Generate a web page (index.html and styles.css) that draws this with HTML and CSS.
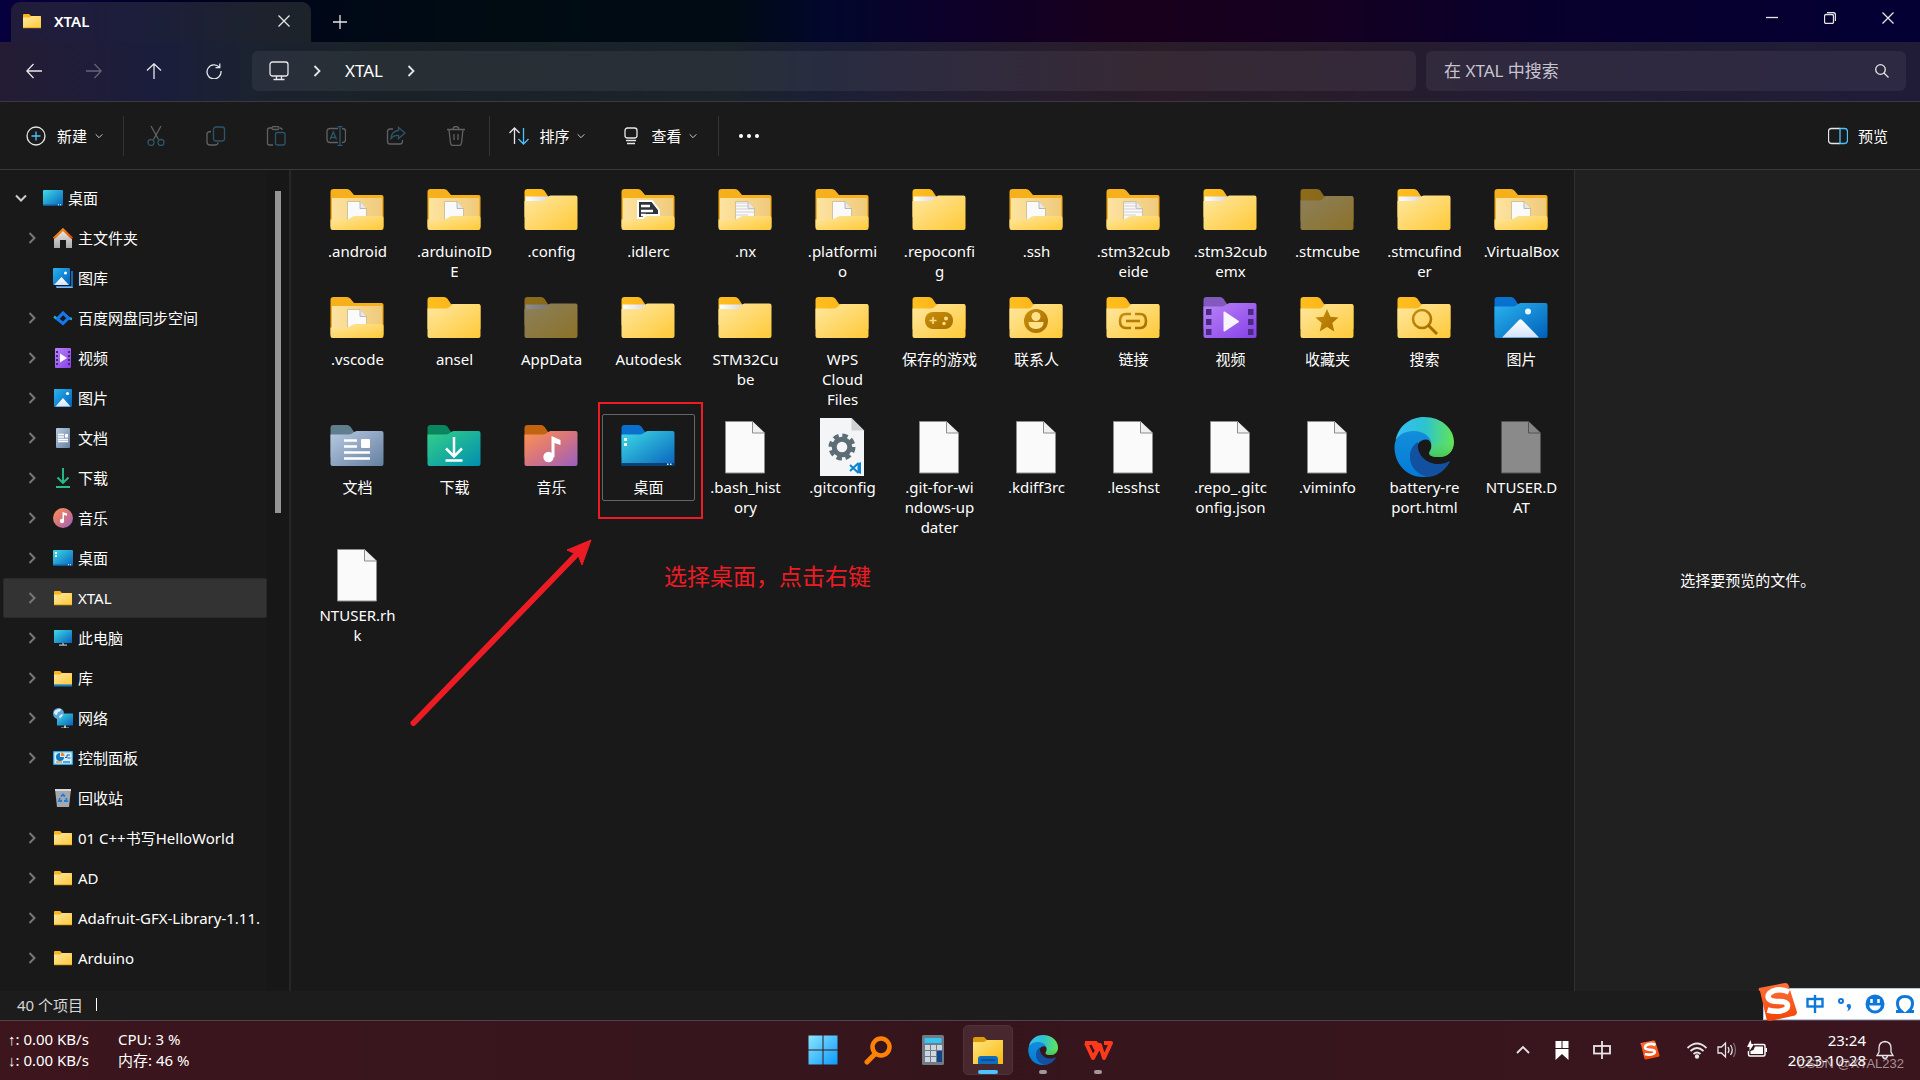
FILE: index.html
```html
<!DOCTYPE html>
<html lang="zh-CN">
<head>
  <meta charset="UTF-8">
  <meta name="viewport" content="width=device-width, initial-scale=1.0">
  <title>XTAL</title>
  <link rel="stylesheet" href="styles.css">
</head>
<body>

<!-- Icon sprite -->
<svg class="sprite" aria-hidden="true">
  <defs>
    <linearGradient id="gFolder" x1="0" y1="0" x2="1" y2="1"><stop offset="0" stop-color="#ffe8a2"/><stop offset="1" stop-color="#ffc937"/></linearGradient>
    <linearGradient id="gTab" x1="0" y1="0" x2="1" y2="0"><stop offset="0" stop-color="#ffbf1f"/><stop offset="1" stop-color="#f5ab14"/></linearGradient>
    <linearGradient id="gInner" x1="0" y1="0" x2="1" y2="0"><stop offset="0" stop-color="#fde3a0"/><stop offset="1" stop-color="#efca7c"/></linearGradient>
    <linearGradient id="gPaper" x1="0" y1="0" x2="1" y2="0"><stop offset="0" stop-color="#ffffff"/><stop offset="1" stop-color="#d9d9e4"/></linearGradient>
    <linearGradient id="gBrown" x1="0" y1="0" x2="1" y2="1"><stop offset="0" stop-color="#c98f0c"/><stop offset="1" stop-color="#a66f00"/></linearGradient>
    <linearGradient id="gVideo" x1="0" y1="0" x2="1" y2="1"><stop offset="0" stop-color="#bb84f8"/><stop offset="1" stop-color="#8540e6"/></linearGradient>
    <linearGradient id="gPic" x1="0" y1="0" x2="1" y2="1"><stop offset="0" stop-color="#2ab4ef"/><stop offset="1" stop-color="#005fba"/></linearGradient>
    <linearGradient id="gSnow" x1="0" y1="0" x2="0" y2="1"><stop offset="0" stop-color="#ffffff"/><stop offset="1" stop-color="#d3e3fa"/></linearGradient>
    <linearGradient id="gDoc" x1="0" y1="0" x2="1" y2="1"><stop offset="0" stop-color="#b9cbe4"/><stop offset="1" stop-color="#647f9f"/></linearGradient>
    <linearGradient id="gDown" x1="0" y1="0" x2="1" y2="1"><stop offset="0" stop-color="#34d087"/><stop offset="1" stop-color="#008fb0"/></linearGradient>
    <linearGradient id="gMusic" x1="0" y1="0" x2="1" y2="1"><stop offset="0" stop-color="#ff9350"/><stop offset=".5" stop-color="#d57480"/><stop offset="1" stop-color="#9860c0"/></linearGradient>
    <linearGradient id="gDesk" x1="0" y1="0" x2="1" y2="1"><stop offset="0" stop-color="#3ddbe6"/><stop offset="1" stop-color="#0862bd"/></linearGradient>
    <linearGradient id="gWin" x1="0" y1="0" x2="1" y2="1"><stop offset="0" stop-color="#8ae6ff"/><stop offset="1" stop-color="#0c99fa"/></linearGradient>
    <linearGradient id="gEdge" x1="0" y1="0" x2="1" y2="0"><stop offset="0" stop-color="#38bdf8"/><stop offset=".5" stop-color="#2cc3d0"/><stop offset="1" stop-color="#64e455"/></linearGradient>
    <linearGradient id="gEdgeGreen" x1="0" y1="0" x2="0" y2="1"><stop offset="0" stop-color="#64e455" stop-opacity="0"/><stop offset="1" stop-color="#45c556"/></linearGradient>
    <linearGradient id="gEdgeBlue" x1="0" y1="0" x2="0" y2="1"><stop offset="0" stop-color="#138ed9"/><stop offset="1" stop-color="#037bd8"/></linearGradient>
    <linearGradient id="gSogou" x1="0" y1="0" x2="0" y2="1"><stop offset="0" stop-color="#ff7038"/><stop offset="1" stop-color="#f04508"/></linearGradient>
    <linearGradient id="gRoof" x1="0" y1="0" x2="1" y2="1"><stop offset="0" stop-color="#f9a010"/><stop offset="1" stop-color="#d83f08"/></linearGradient>
    <linearGradient id="gGray" x1="0" y1="0" x2="0" y2="1"><stop offset="0" stop-color="#e8e8e8"/><stop offset="1" stop-color="#a9a9a9"/></linearGradient>
    <linearGradient id="gTaskFolder" x1="0" y1="0" x2="1" y2="1"><stop offset="0" stop-color="#ffe680"/><stop offset="1" stop-color="#f9b70c"/></linearGradient>
  </defs>

  <!-- 60px file icons -->
  <symbol id="folder" viewBox="0 0 60 60">
    <path d="M3.500 11q0-3 3-3H20q2 0 3.500 1.700L27 15H54q2.500 0 2.500 2V40h-53z" fill="url(#gTab)"/>
    <path d="M3.500 19.500H22q2.500 0 4.500-2.500t4-2H54.500q2 0 2 2V47q0 2-2 2h-49q-2 0-2-2z" fill="url(#gFolder)"/>
  </symbol>
  <symbol id="folder-paper" viewBox="0 0 60 60">
    <path d="M3.500 11q0-3 3-3H20q2 0 3.500 1.700L27.500 16H54v20h-50.500z" fill="url(#gTab)"/>
    <path d="M4.500 15.500H27v6H4.500z" fill="url(#gPaper)"/>
    <path d="M3.500 20H21q2.500 0 4.500-2.700t4-2.800H54.500q2 0 2 2V47q0 2-2 2h-49q-2 0-2-2z" fill="url(#gFolder)"/>
  </symbol>
  <symbol id="folder-open" viewBox="0 0 60 60">
    <path d="M3.500 11q0-3 3-3H20q2 0 3.500 1.700L27 14H54.500q2 0 2 2V46h-53z" fill="#f6b01c"/>
    <path d="M5 17H55V40H5z" fill="url(#gInner)"/>
    <path d="M20.500 20.500H33l6.500 7V42h-19z" fill="#fafafa" stroke="#c8b88c" stroke-width=".8"/>
    <path d="M33 20.500v7h6.500" fill="#e8e8e8" stroke="#a9a9a9" stroke-width=".8"/>
    <path d="M3.500 38.500H19q2.500 0 4.500-1.500t4-2H54.500q2 0 2 2V47q0 2-2 2h-49q-2 0-2-2z" fill="url(#gFolder)"/>
  </symbol>
  <symbol id="folder-code" viewBox="0 0 60 60">
    <use href="#folder-open"/>
    <path d="M20 20H34l7 9v5H29q-2 0-4 3h-5z" fill="#30343a" stroke="#fff" stroke-width="2"/>
    <path d="M23 25h9M23 30h12M23 34h5" stroke="#fff" stroke-width="2.500"/>
  </symbol>
  <symbol id="folder-text" viewBox="0 0 60 60">
    <use href="#folder-open"/>
    <path d="M21 22h12M21 25h12M21 28h18M21 31h18M21 34h12" stroke="#d0d0d0" stroke-width="1"/>
  </symbol>
  <symbol id="folder-game" viewBox="0 0 60 60">
    <use href="#folder"/>
    <rect x="16" y="23" width="28" height="17" rx="8" fill="url(#gBrown)"/>
    <path d="M20.500 31.500h7M24 28v7" stroke="#ffdf82" stroke-width="1.600"/><circle cx="37" cy="29.500" r="2" fill="#ffdf82"/><circle cx="35" cy="34.500" r="1.700" fill="#ffdf82"/>
  </symbol>
  <symbol id="folder-user" viewBox="0 0 60 60">
    <use href="#folder"/>
    <circle cx="30" cy="32" r="12" fill="url(#gBrown)"/><circle cx="30" cy="27.500" r="4.500" fill="#ffe18a"/><path d="M22.500 33h15q0 7-7.500 7t-7.500-7z" fill="#ffe18a"/>
  </symbol>
  <symbol id="folder-link" viewBox="0 0 60 60">
    <use href="#folder"/>
    <path d="M28 25h-5q-6 0-6 7t6 7h5M32 25h5q6 0 6 7t-6 7h-5" fill="none" stroke="url(#gBrown)" stroke-width="2.600"/>
    <path d="M23 32h14" stroke="#b67c05" stroke-width="2.600"/>
  </symbol>
  <symbol id="folder-star" viewBox="0 0 60 60">
    <use href="#folder"/>
    <path d="M30 20l3.400 7.700 8.100.700-6.200 5.500 2 8.500-7.300-4.500-7.300 4.500 2-8.500-6.200-5.500 8.100-.700z" fill="url(#gBrown)"/>
  </symbol>
  <symbol id="folder-search" viewBox="0 0 60 60">
    <use href="#folder"/>
    <circle cx="28" cy="30" r="9" fill="none" stroke="url(#gBrown)" stroke-width="2.600"/><path d="M34 36l9 9" stroke="#a66f00" stroke-width="3"/>
  </symbol>
  <symbol id="folder-video" viewBox="0 0 60 60">
    <path d="M3.500 11q0-3 3-3H20q2 0 3.500 1.700L27 15H54V40h-50.500z" fill="#8259bd"/>
    <path d="M3.500 17.500H22q2.500 0 4.500-2t4-1.500H54.500q2 0 2 2V47q0 2-2 2h-49q-2 0-2-2z" fill="url(#gVideo)"/>
    <path d="M6 20h5.500v6H6zM6 30h5.500v6H6zM6 40h5.500v6H6zM48 20h5.500v6H48zM48 30h5.500v6H48zM48 40h5.500v6H48z" fill="#4a2a83"/>
    <path d="M23.500 23.500v18q0 1.500 1.500.700l13.500-9q1-.700 0-1.400L25 22.800q-1.500-.8-1.500.7z" fill="#f8f3ff"/>
  </symbol>
  <symbol id="folder-pic" viewBox="0 0 60 60">
    <path d="M3.500 11q0-3 3-3H20q2 0 3.500 1.700L27 15H54V40h-50.500z" fill="#0870cf"/>
    <path d="M3.500 17.500H22q2.500 0 4.500-2t4-1.500H54.500q2 0 2 2V47q0 2-2 2h-49q-2 0-2-2z" fill="url(#gPic)"/>
    <path d="M11 48.500L28 31q1.500-1.500 3 0L48 48.500z" fill="url(#gSnow)"/><circle cx="37" cy="22.500" r="3" fill="#e8f6ff"/>
  </symbol>
  <symbol id="folder-doc" viewBox="0 0 60 60">
    <path d="M3.500 11q0-3 3-3H20q2 0 3.500 1.700L27 15H54V40h-50.500z" fill="#5f7f8c"/>
    <path d="M3.500 17.500H22q2.500 0 4.500-2t4-1.500H54.500q2 0 2 2V47q0 2-2 2h-49q-2 0-2-2z" fill="url(#gDoc)"/>
    <path d="M17 23.500h13M17 29.500h13M17 35.500h26M17 41.500h26" stroke="#fff" stroke-width="2.600"/><rect x="34" y="22" width="9" height="9" rx="1" fill="#fff"/>
  </symbol>
  <symbol id="folder-down" viewBox="0 0 60 60">
    <path d="M3.500 11q0-3 3-3H20q2 0 3.500 1.700L27 15H54V40h-50.500z" fill="#0a8560"/>
    <path d="M3.500 17.500H22q2.500 0 4.500-2t4-1.500H54.500q2 0 2 2V47q0 2-2 2h-49q-2 0-2-2z" fill="url(#gDown)"/>
    <path d="M30 20v19M22 31.500l8 8 8-8M21.500 43.500h17" fill="none" stroke="#fff" stroke-width="2.500"/>
  </symbol>
  <symbol id="folder-music" viewBox="0 0 60 60">
    <path d="M3.500 11q0-3 3-3H20q2 0 3.500 1.700L27 15H54V40h-50.500z" fill="#c2630f"/>
    <path d="M3.500 17.500H22q2.500 0 4.500-2t4-1.500H54.500q2 0 2 2V47q0 2-2 2h-49q-2 0-2-2z" fill="url(#gMusic)"/>
    <path d="M30.500 19l9 4v5l-6-2V40h-3z" fill="#fff"/><circle cx="27.500" cy="40" r="5.200" fill="#fff"/>
  </symbol>
  <symbol id="folder-desk" viewBox="0 0 60 60">
    <path d="M3.500 11q0-3 3-3H20q2 0 3.500 1.700L27 15H54V40h-50.500z" fill="#0b6fce"/>
    <path d="M3.500 17.500H22q2.500 0 4.500-2t4-1.500H54.500q2 0 2 2V47q0 2-2 2h-49q-2 0-2-2z" fill="url(#gDesk)"/>
    <path d="M3.500 46h53v1q0 2-2 2h-49q-2 0-2-2z" fill="#0b4174"/>
    <path d="M6 21h3v3H6zM6 26h3v3H6zM49 46.500h1.500v1.500H49zM52 46.500h1.500v1.500H52z" fill="#e8ffff"/>
  </symbol>
  <symbol id="file" viewBox="0 0 60 60">
    <path d="M10.500 4.500H37.500l12 11.500V56h-39z" fill="#fafafa" stroke="#8d8d8d"/><path d="M37.500 4.500V16h12" fill="#f0f0f0" stroke="#8d8d8d"/>
  </symbol>
  <symbol id="file-config" viewBox="0 0 60 60">
    <path d="M8 1H39.500L52 13.500V59H8z" fill="#f4f5f6"/><path d="M39.500 1v12.500H52z" fill="#cfd2d4"/>
    <circle cx="30" cy="30" r="7.800" fill="none" stroke="#5d6d75" stroke-width="5"/>
    <circle cx="30" cy="30" r="11.500" fill="none" stroke="#5d6d75" stroke-width="4" stroke-dasharray="5.400 3.630"/>
    <path d="M49 45v12l-3.500-1.500V46.500z" fill="#0a83d0"/><path d="M46.500 46L38 54M46.500 56L38 48" stroke="#0a83d0" stroke-width="2"/>
  </symbol>
  <symbol id="edge" viewBox="0 0 60 60">
    <path d="M1.500 24C4 9 16 0 30 0c18 0 30 12 30 25 0 9-6 15-15 15-7 0-11-2-9.500-5 3-4 3-11-3.500-14.500C22 15 5 16 1.500 24z" fill="url(#gEdge)"/>
    <path d="M60 22c0 12-6 18-15 18-7 0-11-2-9.500-5q2.500-4 2-9z" fill="url(#gEdgeGreen)"/>
    <path d="M.5 29C1 19 10 14 20 14c9 0 16 5 17 11-3-4-10-3-13 2-6 10-1 26 13 31.500-3 1-5 1.500-8 1.500C13 60 0 47 .5 29z" fill="url(#gEdgeBlue)"/>
    <path d="M24 25c-2 12 8 22 20 22 5 0 8-1 10.500-2.500 1-.5 1.500 0 1 1C51 54 42 60 33 60 22 57 15 48 16 38c.5-6 4-11 8-13z" fill="#1250a0"/>
  </symbol>

  <!-- 20px tree icons -->
  <symbol id="s-desk" viewBox="0 0 20 20"><rect y="2" width="20" height="15.500" rx="1" fill="url(#gDesk)"/><path d="M0 16.500h20v1H0z" fill="#0b5fa8"/><path d="M15 16.300h1v1h-1zM17 16.300h1v1h-1z" fill="#fff"/></symbol>
  <symbol id="s-desk2" viewBox="0 0 20 20"><use href="#s-desk"/><path d="M2 4h2v2H2zM2 7h2v2H2z" fill="#fff"/></symbol>
  <symbol id="s-home" viewBox="0 0 20 20"><path d="M1 9.500L10 2l9 7.500V20h-6v-8H7v8H1z" fill="url(#gGray)"/><path d="M.7 10.500L10 1.500l9.300 9" fill="none" stroke="url(#gRoof)" stroke-width="2.400"/></symbol>
  <symbol id="s-gallery" viewBox="0 0 20 20"><path d="M3 3h17v17H3z" fill="#0b6bc0"/><path d="M3 18.500h16l1 1.500H4z" fill="#7ab8f0"/><path d="M0 0h18v18H0z" fill="#191919"/><rect width="17" height="17" rx="1" fill="url(#gPic)"/><path d="M1 17l7.500-8 7.500 8z" fill="url(#gSnow)"/><circle cx="12.500" cy="5" r="1.500" fill="#fff"/></symbol>
  <symbol id="s-baidu" viewBox="0 0 20 20"><path d="M1 8.500l3 2.500L10 5l5 5 4 1" fill="none" stroke="#22aed0" stroke-width="2.400"/><path d="M4.500 11L10 5l5.500 5L10 15.500z" fill="none" stroke="#1478f0" stroke-width="3"/></symbol>
  <symbol id="s-video" viewBox="0 0 20 20"><rect x="2" width="16" height="20" rx="1" fill="url(#gVideo)"/><path d="M3 3h2v2H3zM3 7h2v2H3zM3 11h2v2H3zM3 15h2v2H3zM15 3h2v2h-2zM15 7h2v2h-2zM15 11h2v2h-2zM15 15h2v2h-2z" fill="#44277c"/><path d="M7 5.500l7 4.500-7 4.500z" fill="#fff"/></symbol>
  <symbol id="s-pic" viewBox="0 0 20 20"><rect x="1" y="1" width="18" height="18" rx="1" fill="url(#gPic)"/><path d="M2.500 18.500L10 10l7.500 8.500z" fill="url(#gSnow)"/><circle cx="14.500" cy="5.500" r="1.600" fill="#fff"/></symbol>
  <symbol id="s-doc" viewBox="0 0 20 20"><rect x="3" width="14" height="20" rx="1" fill="url(#gDoc)"/><path d="M5 6.500h6M5 9h6M5 11.500h10M5 13.500h10" stroke="#fff" stroke-width="1.300"/><path d="M12 6h3v3.500h-3z" fill="#fff"/></symbol>
  <symbol id="s-down" viewBox="0 0 20 20"><path d="M10 0v15M4.500 9.500L10 15l5.500-5.500M3 19h14" fill="none" stroke="#27bd8d" stroke-width="1.900"/></symbol>
  <symbol id="s-music" viewBox="0 0 20 20"><circle cx="10" cy="10" r="10" fill="url(#gMusic)"/><path d="M9.500 4l4.500 1.500v2.300l-3-.8v6H9.500z" fill="#fff"/><circle cx="9" cy="13" r="2.200" fill="#fff"/></symbol>
  <symbol id="s-folder" viewBox="0 0 20 20"><path d="M1 4q0-1 1-1h5l2 2h9q1 0 1 1v9H1z" fill="#fbb51b"/><path d="M1 6.500h6.500l2-1.500H18q1 0 1 1v11H1z" fill="url(#gFolder)"/><path d="M1 16.300h18v.9H1z" fill="#e8a817"/></symbol>
  <symbol id="s-pc" viewBox="0 0 20 20"><rect x="1" y="2" width="18" height="13" rx=".5" fill="url(#gDesk)"/><path d="M9 15h2v2H9z" fill="#7e8a92"/><path d="M6 16.500h8v1.200H6z" fill="#bcc6cc"/></symbol>
  <symbol id="s-lib" viewBox="0 0 20 20"><use href="#s-folder"/><path d="M1 16.500h18v2H1z" fill="#0d7fd8"/></symbol>
  <symbol id="s-net" viewBox="0 0 20 20"><rect x="4" y="5.500" width="16" height="12" fill="url(#gDesk)"/><path d="M11 17.500h2v2h3v1H8v-1h3z" fill="#bcc6cc"/><circle cx="5.500" cy="5.500" r="5.500" fill="#5aa7d8"/><path d="M2 2.500q4-2.500 6-1.500 0 3-3 3l-1 3q-3 0-3-3zM6 8l3-2 1 1-3 3.500z" fill="#d8edf8"/></symbol>
  <symbol id="s-ctrl" viewBox="0 0 20 20"><rect y="3" width="20" height="14" rx="1" fill="#2aa6e4"/><path d="M1.300 4.300h17.400v11.400H1.300z" fill="#d2effb"/><path d="M7 5a4 4 0 1 0 4 4H7z" fill="#1279c4"/><path d="M8 4.500a3.500 3.500 0 0 1 3.500 3.500H8z" fill="#f2861c"/><path d="M12 9.500h2V7h3M14.500 10h3" stroke="#0c62ac" fill="none"/><path d="M3 14h6" stroke="#f2861c" stroke-width="1.300"/><path d="M10 14h7" stroke="#1279c4" stroke-width="1.300"/></symbol>
  <symbol id="s-bin" viewBox="0 0 20 20"><path d="M2 1h16l-2 18H4z" fill="#a4a8ad"/><path d="M2 1h16v2H2z" fill="#d4d8dc"/><path d="M8 8.500L10 6.500l2 2M13 10l1 3h-3M9 13H6l1-3" stroke="#1a7fd8" stroke-width="1.800" fill="none"/></symbol>

  <!-- line glyphs -->
  <symbol id="i-chev-r" viewBox="0 0 12 12"><path d="M3.500 1l5 5-5 5"/></symbol>
  <symbol id="i-chev-d" viewBox="0 0 12 12"><path d="M1 3.500l5 5 5-5"/></symbol>
  <symbol id="i-x" viewBox="0 0 12 12"><path d="M.500.500l11 11M11.500.500l-11 11"/></symbol>
  <symbol id="i-search" viewBox="0 0 16 16"><circle cx="6.500" cy="6.500" r="4.800"/><path d="M10 10l4.500 4.500"/></symbol>
  <symbol id="i-sogou" viewBox="0 0 40 40"><path d="M3 8q-2 0-1-3l26-5q3 0 3.500 2L40 29q0 3-2 3.500L13 38q-3 0-3.500-2z" transform="translate(-1 1)" fill="url(#gSogou)"/><path d="M31 10q-8-4-16-1-7 3.500-4 8 2 2.500 10 2.500 8 0 8.500 3.500.5 4.500-7 6-6 1-13-1" fill="none" stroke="#fff" stroke-width="5.500"/></symbol>
</svg>

<header class="titlebar">
  <div class="tab">
    <svg class="ic20"><use href="#s-folder"/></svg>
    <span class="tab-name">XTAL</span>
    <button class="tab-close" aria-label="关闭标签页"><svg class="ic12 line"><use href="#i-x"/></svg></button>
  </div>
  <button class="tab-new" aria-label="新标签页"><svg class="line" width="14" height="14" viewBox="0 0 14 14"><path d="M7 0v14M0 7h14"/></svg></button>
  <div class="win-buttons">
    <button aria-label="最小化"><svg class="ic12 line"><path d="M0 5.500h12"/></svg></button>
    <button aria-label="还原"><svg class="ic12 line"><rect x=".5" y="2.500" width="9" height="9" rx="1.500"/><path d="M3 .500h6q2.500 0 2.500 2.500v6"/></svg></button>
    <button aria-label="关闭"><svg class="ic12 line"><use href="#i-x"/></svg></button>
  </div>
</header>

<div class="navbar">
  <div class="nav-buttons">
    <button aria-label="后退"><svg class="ic16 line" viewBox="0 0 16 16"><path d="M16 8H1M7.500 1L.800 8l6.700 7"/></svg></button>
    <button aria-label="前进" disabled><svg class="ic16 line" viewBox="0 0 16 16"><path d="M0 8h15M8.500 1l6.700 7-6.700 7"/></svg></button>
    <button aria-label="上移"><svg class="ic16 line" viewBox="0 0 16 16"><path d="M8 16V1M1 7.500L8 .800l7 6.700"/></svg></button>
    <button aria-label="刷新"><svg class="ic16 line" viewBox="0 0 16 16"><path d="M13.500 4.500A7 7 0 1 0 15 8M9.500 4.700h4.300V.500"/></svg></button>
  </div>
  <nav class="address" aria-label="地址">
    <svg class="ic20 line" viewBox="0 0 20 20"><rect x="1" y="1" width="18" height="14" rx="2.500"/><path d="M7.500 15v3M12.500 15v3M4.500 18.500h11"/></svg>
    <svg class="ic12 line bold"><use href="#i-chev-r"/></svg>
    <a href="#">XTAL</a>
    <svg class="ic12 line bold"><use href="#i-chev-r"/></svg>
  </nav>
  <form class="search">
    <input type="text" placeholder="在 XTAL 中搜索" aria-label="在 XTAL 中搜索">
    <button type="button" aria-label="搜索"><svg class="ic16 line"><use href="#i-search"/></svg></button>
  </form>
</div>

<div class="toolbar">
  <button class="tool tool-new"><svg class="ic20 line" viewBox="0 0 20 20"><circle cx="10" cy="10" r="9"/><path class="blue" d="M10 5.500v9M5.500 10h9"/></svg>新建<svg class="caret line"><use href="#i-chev-d"/></svg></button>
  <i class="sep"></i>
  <div class="tool-icons">
    <button aria-label="剪切" disabled><svg class="ic20 line" viewBox="0 0 20 20"><path d="M5 0l7.500 13.500M15 0L7.500 13.500"/><g class="blue"><circle cx="5" cy="16.500" r="3"/><circle cx="15" cy="16.500" r="3"/></g></svg></button>
    <button aria-label="复制" disabled><svg class="ic20 line" viewBox="0 0 20 20"><path d="M5 5.500Q1 5.500 1 8v8q0 3 3 3h5q3 0 3-2.500"/><rect class="blue" x="7.500" y="1" width="11" height="14" rx="2.500"/></svg></button>
    <button aria-label="粘贴" disabled><svg class="ic20 line" viewBox="0 0 20 20"><path d="M6 2H3.500Q1.500 2 1.500 4v13q0 2 2 2H7M14 2q2 0 2 2"/><rect x="6" y=".5" width="7" height="3" rx="1.500"/><rect class="blue" x="9.500" y="6.500" width="9.500" height="12.500" rx="2"/></svg></button>
    <button aria-label="重命名" disabled><svg class="ic20 line" viewBox="0 0 20 20"><path d="M12 2.500H4Q1 2.500 1 5.500v8q0 3 3 3h8M16 2.500q3.500 0 3.500 3v8q0 3-3.500 3"/><path class="blue" d="M4 13.500L7.300 6l3.200 7.500M5 11.500h4.500M14 .500v19M11.500.500h5M11.500 19.500h5"/></svg></button>
    <button aria-label="共享" disabled><svg class="ic20 line" viewBox="0 0 20 20"><path d="M7 3H4Q1.500 3 1.500 5.500v10Q1.500 18 4 18h10q2.500 0 2.500-2.500V14"/><path class="blue" d="M12.500 1.500L19 7l-6.500 5.500V9.500Q8 9 5 12.500 5.500 5 12.500 4.500z"/></svg></button>
    <button aria-label="删除" disabled><svg class="ic20 line" viewBox="0 0 20 20"><path d="M1 3.500h18M7 3.500q0-3 3-3t3 3M3 3.500L4.500 17q.3 2.500 2.500 2.500h6q2.200 0 2.500-2.500L17 3.500M8 8v6M12 8v6"/></svg></button>
  </div>
  <i class="sep"></i>
  <button class="tool tool-wide"><svg class="ic20 line" viewBox="0 0 20 20"><path d="M5.500 18V2M.500 7l5-5 5 5"/><path class="blue" d="M14.500 2v16M9.500 13l5 5 5-5"/></svg>排序<svg class="caret line"><use href="#i-chev-d"/></svg></button>
  <button class="tool tool-wide"><svg class="ic20 line" viewBox="0 0 20 20"><rect x="4" y="2" width="12" height="10" rx="2.500"/><path d="M5 14.500h10M6 17.500h8"/></svg>查看<svg class="caret line"><use href="#i-chev-d"/></svg></button>
  <i class="sep"></i>
  <button class="more" aria-label="更多"><svg class="ic20" viewBox="0 0 20 20" fill="#fff"><circle cx="2" cy="10" r="2"/><circle cx="10" cy="10" r="2"/><circle cx="18" cy="10" r="2"/></svg></button>
  <button class="tool preview-toggle"><svg class="ic20 line" viewBox="0 0 20 20"><path d="M12 2.500H3.500Q.500 2.500.500 5.500v9q0 3 3 3H12"/><path class="blue" d="M12 2.500h4.500q3 0 3 3v9q0 3-3 3H12z"/></svg>预览</button>
</div>

<div class="body">
  <aside class="sidebar">
    <ul class="tree">
      <li><a class="root" href="#"><svg class="ic12 arrow open"><use href="#i-chev-d"/></svg><svg class="ic20"><use href="#s-desk"/></svg>桌面</a></li>
      <li><a href="#"><svg class="ic12 arrow"><use href="#i-chev-r"/></svg><svg class="ic20"><use href="#s-home"/></svg>主文件夹</a></li>
      <li><a href="#"><svg class="ic12 arrow"></svg><svg class="ic20"><use href="#s-gallery"/></svg>图库</a></li>
      <li><a href="#"><svg class="ic12 arrow"><use href="#i-chev-r"/></svg><svg class="ic20"><use href="#s-baidu"/></svg>百度网盘同步空间</a></li>
      <li><a href="#"><svg class="ic12 arrow"><use href="#i-chev-r"/></svg><svg class="ic20"><use href="#s-video"/></svg>视频</a></li>
      <li><a href="#"><svg class="ic12 arrow"><use href="#i-chev-r"/></svg><svg class="ic20"><use href="#s-pic"/></svg>图片</a></li>
      <li><a href="#"><svg class="ic12 arrow"><use href="#i-chev-r"/></svg><svg class="ic20"><use href="#s-doc"/></svg>文档</a></li>
      <li><a href="#"><svg class="ic12 arrow"><use href="#i-chev-r"/></svg><svg class="ic20"><use href="#s-down"/></svg>下载</a></li>
      <li><a href="#"><svg class="ic12 arrow"><use href="#i-chev-r"/></svg><svg class="ic20"><use href="#s-music"/></svg>音乐</a></li>
      <li><a href="#"><svg class="ic12 arrow"><use href="#i-chev-r"/></svg><svg class="ic20"><use href="#s-desk2"/></svg>桌面</a></li>
      <li><a class="current" href="#"><svg class="ic12 arrow"><use href="#i-chev-r"/></svg><svg class="ic20"><use href="#s-folder"/></svg>XTAL</a></li>
      <li><a href="#"><svg class="ic12 arrow"><use href="#i-chev-r"/></svg><svg class="ic20"><use href="#s-pc"/></svg>此电脑</a></li>
      <li><a href="#"><svg class="ic12 arrow"><use href="#i-chev-r"/></svg><svg class="ic20"><use href="#s-lib"/></svg>库</a></li>
      <li><a href="#"><svg class="ic12 arrow"><use href="#i-chev-r"/></svg><svg class="ic20"><use href="#s-net"/></svg>网络</a></li>
      <li><a href="#"><svg class="ic12 arrow"><use href="#i-chev-r"/></svg><svg class="ic20"><use href="#s-ctrl"/></svg>控制面板</a></li>
      <li><a href="#"><svg class="ic12 arrow"></svg><svg class="ic20"><use href="#s-bin"/></svg>回收站</a></li>
      <li><a href="#"><svg class="ic12 arrow"><use href="#i-chev-r"/></svg><svg class="ic20"><use href="#s-folder"/></svg>01 C++书写HelloWorld</a></li>
      <li><a href="#"><svg class="ic12 arrow"><use href="#i-chev-r"/></svg><svg class="ic20"><use href="#s-folder"/></svg>AD</a></li>
      <li><a href="#"><svg class="ic12 arrow"><use href="#i-chev-r"/></svg><svg class="ic20"><use href="#s-folder"/></svg>Adafruit-GFX-Library-1.11.</a></li>
      <li><a href="#"><svg class="ic12 arrow"><use href="#i-chev-r"/></svg><svg class="ic20"><use href="#s-folder"/></svg>Arduino</a></li>
    </ul>
    <div class="scroll"><div class="thumb"></div></div>
  </aside>

  <main class="files">
    <div class="item"><svg><use href="#folder-open"/></svg><span>.android</span></div>
    <div class="item"><svg><use href="#folder-open"/></svg><span>.arduinoID<br>E</span></div>
    <div class="item"><svg><use href="#folder-paper"/></svg><span>.config</span></div>
    <div class="item"><svg><use href="#folder-code"/></svg><span>.idlerc</span></div>
    <div class="item"><svg><use href="#folder-text"/></svg><span>.nx</span></div>
    <div class="item"><svg><use href="#folder-open"/></svg><span>.platformi<br>o</span></div>
    <div class="item"><svg><use href="#folder-paper"/></svg><span>.repoconfi<br>g</span></div>
    <div class="item"><svg><use href="#folder-open"/></svg><span>.ssh</span></div>
    <div class="item"><svg><use href="#folder-text"/></svg><span>.stm32cub<br>eide</span></div>
    <div class="item"><svg><use href="#folder-paper"/></svg><span>.stm32cub<br>emx</span></div>
    <div class="item hidden-file"><svg><use href="#folder"/></svg><span>.stmcube</span></div>
    <div class="item"><svg><use href="#folder-paper"/></svg><span>.stmcufind<br>er</span></div>
    <div class="item"><svg><use href="#folder-open"/></svg><span>.VirtualBox</span></div>

    <div class="item"><svg><use href="#folder-open"/></svg><span>.vscode</span></div>
    <div class="item"><svg><use href="#folder"/></svg><span>ansel</span></div>
    <div class="item hidden-file"><svg><use href="#folder-paper"/></svg><span>AppData</span></div>
    <div class="item"><svg><use href="#folder-paper"/></svg><span>Autodesk</span></div>
    <div class="item"><svg><use href="#folder-paper"/></svg><span>STM32Cu<br>be</span></div>
    <div class="item"><svg><use href="#folder"/></svg><span>WPS<br>Cloud<br>Files</span></div>
    <div class="item"><svg><use href="#folder-game"/></svg><span>保存的游戏</span></div>
    <div class="item"><svg><use href="#folder-user"/></svg><span>联系人</span></div>
    <div class="item"><svg><use href="#folder-link"/></svg><span>链接</span></div>
    <div class="item"><svg><use href="#folder-video"/></svg><span>视频</span></div>
    <div class="item"><svg><use href="#folder-star"/></svg><span>收藏夹</span></div>
    <div class="item"><svg><use href="#folder-search"/></svg><span>搜索</span></div>
    <div class="item"><svg><use href="#folder-pic"/></svg><span>图片</span></div>

    <div class="item"><svg><use href="#folder-doc"/></svg><span>文档</span></div>
    <div class="item"><svg><use href="#folder-down"/></svg><span>下载</span></div>
    <div class="item"><svg><use href="#folder-music"/></svg><span>音乐</span></div>
    <div class="item focused"><svg><use href="#folder-desk"/></svg><span>桌面</span></div>
    <div class="item"><svg><use href="#file"/></svg><span>.bash_hist<br>ory</span></div>
    <div class="item"><svg><use href="#file-config"/></svg><span>.gitconfig</span></div>
    <div class="item"><svg><use href="#file"/></svg><span>.git-for-wi<br>ndows-up<br>dater</span></div>
    <div class="item"><svg><use href="#file"/></svg><span>.kdiff3rc</span></div>
    <div class="item"><svg><use href="#file"/></svg><span>.lesshst</span></div>
    <div class="item"><svg><use href="#file"/></svg><span>.repo_.gitc<br>onfig.json</span></div>
    <div class="item"><svg><use href="#file"/></svg><span>.viminfo</span></div>
    <div class="item"><svg><use href="#edge"/></svg><span>battery-re<br>port.html</span></div>
    <div class="item hidden-file"><svg><use href="#file"/></svg><span>NTUSER.D<br>AT</span></div>

    <div class="item"><svg><use href="#file"/></svg><span>NTUSER.rh<br>k</span></div>

    <svg class="note-arrow" viewBox="0 0 190 200"><path d="M10.500 189L172 22" stroke="#ed1c24" stroke-width="6" stroke-linecap="round"/><path d="M188 6L179 31l-4-10-11-5z" fill="#ed1c24" stroke="#ed1c24"/></svg>
    <p class="note-text">选择桌面，点击右键</p>
  </main>

  <aside class="preview">选择要预览的文件。</aside>
</div>

<footer class="status"><span>40 个项目</span><i></i></footer>

<div class="taskbar">
  <div class="monitor">
    <span><b>↑</b>: 0.00 KB/s</span><span>CPU: 3 %</span>
    <span><b>↓</b>: 0.00 KB/s</span><span>内存: 46 %</span>
  </div>
  <div class="apps">
    <button aria-label="开始"><svg viewBox="0 0 30 30"><path d="M.500.500h14v14h-14zM15.500.500h14v14h-14zM.500 15.500h14v14h-14zM15.500 15.500h14v14h-14z" fill="url(#gWin)"/></svg></button>
    <button aria-label="搜索"><svg viewBox="0 0 30 30" fill="none" stroke="#ff8206"><circle cx="18" cy="12" r="8.500" stroke-width="4.500"/><path d="M12 19l-8 8" stroke-width="5" stroke-linecap="round"/></svg></button>
    <button aria-label="计算器"><svg viewBox="0 0 30 30"><rect x="4" width="22" height="30" rx="1.500" fill="#727a85"/><path d="M6.500 3h17v5h-17z" fill="#34c7f2"/><path d="M7 10h5v5H7zM13 10h5v5h-5zM19 10h5v5h-5zM7 16h5v5H7zM13 16h5v5h-5zM7 22h5v5H7zM13 22h5v5h-5z" fill="#cdd5de"/><path d="M19 16h5v11h-5z" fill="#11458a"/></svg></button>
    <button class="active" aria-label="文件资源管理器"><svg viewBox="0 0 30 30"><path d="M0 4q0-2 2-2h9l3 3v6H0z" fill="#dd9a0a"/><path d="M0 7h11l3-2h16v24H0z" fill="url(#gTaskFolder)"/><path d="M5 29v-5q0-3 3-3h14q3 0 3 3v5z" fill="#0e6dbf"/><path d="M8 25h14" stroke="#0a4a8c" stroke-width="1.500"/></svg></button>
    <button class="running" aria-label="Edge"><svg><use href="#edge"/></svg></button>
    <button class="running" aria-label="WPS"><svg viewBox="0 0 30 30" fill="none" stroke="#ff3a1c" stroke-width="4"><path d="M2 8h12M3 8l7 15 7-13 4 13 7-15h-7M10 8l3 6M16 8l-2 4" stroke-linejoin="round"/></svg></button>
  </div>
  <div class="tray">
    <button aria-label="显示隐藏的图标"><svg class="ic16 line bold" viewBox="0 0 16 16"><path d="M2 11l6-6 6 6"/></svg></button>
    <button class="tray-flag" aria-label="输入法"><svg class="ic20" viewBox="0 0 20 20" fill="#fff"><path d="M3.500 1h6v7h-6zM10.500 1h6v7h-6zM3.500 9h13v11l-6.500-6-6.500 6z"/></svg></button>
    <button class="tray-flag" aria-label="中文"><svg class="ic20 line bold" viewBox="0 0 20 20"><rect x="2" y="6" width="16" height="7.500"/><path d="M10 1v18"/></svg></button>
    <button class="tray-sogou" aria-label="搜狗输入法"><svg class="ic20"><use href="#i-sogou"/></svg></button>
    <button class="tray-status" aria-label="网络、音量、电池">
      <svg class="ic20 line bold" viewBox="0 0 20 20"><path d="M.500 8Q10-1 19.500 8M3.500 11q6.500-6 13 0M6.500 14q3.500-3 7 0"/><circle cx="10" cy="16.500" r="1.300" fill="#fff"/></svg>
      <svg class="ic20 line" viewBox="0 0 20 20"><path d="M1 7h3.500l4-4v14l-4-4H1z"/><path d="M11 7q2 3 0 6M13.500 5q3.500 5 0 10"/><path d="M16.500 3q4 7 0 14" opacity=".4"/></svg>
      <svg class="ic20" viewBox="0 0 20 20"><path d="M7 4.500h9.500q1.500 0 1.500 1.500v8.500q0 1.500-1.500 1.500H3q-1.500 0-1.500-1.500V11" fill="none" stroke="#fff" stroke-width="1.500"/><path d="M8 6.500h8v7.500H3.500v-3l3-1zM18.500 8h1.500v4h-1.500zM3.500 0L0 7h2.500v4L7 4H4.500z" fill="#fff"/></svg>
    </button>
    <div class="clock"><time>23:24</time><time>2023-10-28</time></div>
    <button class="bell" aria-label="通知"><svg class="ic20 line" viewBox="0 0 20 20"><path d="M2 15.500h16L16 12V8q0-6-6-6.500Q4 2 4 8v4zM7.500 16q.5 2.500 2.500 2.500t2.500-2.500"/></svg></button>
  </div>
</div>

<div class="ime">
  <svg class="ime-logo"><use href="#i-sogou"/></svg>
  <svg class="ic20" viewBox="0 0 20 20" fill="none" stroke="#0d78dc" stroke-width="2.400"><rect x="2.500" y="5" width="15" height="7.500"/><path d="M10 1v18"/></svg>
  <svg class="ic20" viewBox="0 0 20 20"><circle cx="6" cy="7" r="2" fill="none" stroke="#0d78dc" stroke-width="2"/><path d="M12 10.500q4-1.500 4 2 0 3-4 5 2-2.500 1-4-2-.5-1-3z" fill="#0d78dc"/></svg>
  <svg class="ic20" viewBox="0 0 20 20"><circle cx="10" cy="10" r="9.500" fill="#0d78dc"/><path d="M6.500 5v4M13.500 5v4" stroke="#fff" stroke-width="2.500"/><path d="M4 11.500h12q-1.500 5-6 5t-6-5z" fill="#fff"/></svg>
  <svg class="ic20" viewBox="0 0 20 20" fill="none" stroke="#0d78dc" stroke-width="3"><path d="M1 17.500h5.500Q2.500 14 2.500 9.500q0-7 7.500-7t7.500 7q0 4.500-4 8H19"/></svg>
</div>
<div class="watermark">CSDN @XTAL232</div>

</body>
</html>
```
FILE: styles.css
```css
* {
  box-sizing: border-box;
}

body {
  margin: 0;
  height: 100vh;
  display: flex;
  flex-direction: column;
  overflow: hidden;
  background: #191919;
  color: #fff;
  font-family: "Noto Sans", "Noto Sans CJK SC", sans-serif;
  font-size: 15px;
  line-height: 20px;
}

button {
  display: flex;
  align-items: center;
  justify-content: center;
  padding: 0;
  border: 0;
  background: none;
  color: inherit;
  font: inherit;
}

a {
  color: inherit;
  text-decoration: none;
}

svg {
  flex: none;
}

.sprite {
  position: absolute;
  width: 0;
  height: 0;
}

.ic12 {
  width: 12px;
  height: 12px;
}

.ic16 {
  width: 16px;
  height: 16px;
}

.ic20 {
  width: 20px;
  height: 20px;
}

.line {
  fill: none;
  stroke: #e6e6e6;
  stroke-width: 1.3;
}

.line.bold {
  stroke-width: 1.8;
}

.line .blue {
  stroke: #4cc2ff;
}

/* Title bar */
.titlebar {
  display: flex;
  height: 42px;
  padding: 2px 3px 0 11px;
  background: linear-gradient(90deg, #06003e 0%, #02001f 12%, #000817 17%, #000c12 26%, #000b14 38%, #02072c 43%, #0d0029 50%, #18001c 58%, #160020 68%, #08002c 80%, #040034 100%);
}

.tab {
  display: flex;
  align-items: center;
  width: 300px;
  padding: 0 12px 2px 11px;
  border-radius: 9px 9px 0 0;
  background: linear-gradient(90deg, #211c3a, #1c1e3c 40%, #1d222e 80%, #1d2329);
}

.tab-name {
  flex: 1;
  padding-left: 12px;
  font-weight: 600;
}

.tab-close {
  width: 30px;
  height: 30px;
}

.tab-new {
  width: 58px;
}

.win-buttons {
  display: flex;
  margin-left: auto;
}

.win-buttons button {
  width: 58px;
  height: 32px;
}

/* Address row */
.navbar {
  display: flex;
  align-items: center;
  gap: 8px;
  height: 60px;
  padding: 0 14px 2px 4px;
  border-bottom: 1px solid #3a3a3a;
  background: linear-gradient(90deg, #241c34 0%, #1b1d3c 8%, #1b2230 13%, #1a2228 20%, #1b232b 38%, #1b1f36 43%, #241e32 50%, #2a1c28 60%, #281c2c 70%, #221c34 80%, #201c38 100%);
}

.nav-buttons {
  display: flex;
  width: 240px;
}

.nav-buttons button {
  width: 60px;
  height: 40px;
}

button:disabled {
  opacity: 0.35;
}

.address,
.search {
  display: flex;
  align-items: center;
  height: 40px;
  border-radius: 6px;
  background: rgba(255, 255, 255, 0.06);
  font-size: 17px;
}

.address {
  flex: 1;
  gap: 22px;
  margin-right: 2px;
  padding-left: 17px;
}

.search {
  width: 25vw;
  padding: 0 16px 0 18px;
}

.search input {
  flex: 1;
  min-width: 0;
  border: 0;
  padding: 0;
  outline: 0;
  background: none;
  color: #fff;
  font: inherit;
}

.search input::placeholder {
  color: #c8c5cf;
  opacity: 1;
}

/* Command bar */
.toolbar {
  display: flex;
  align-items: center;
  height: 68px;
  padding: 0 32px 0 26px;
  border-bottom: 1px solid #3a3a3a;
  background: #1a1a1a;
}

.tool {
  gap: 10px;
}

.tool .caret {
  width: 8px;
  height: 8px;
  margin-left: -3px;
  overflow: visible;
}

.tool-new {
  gap: 11px;
  width: 97px;
  justify-content: flex-start;
}

.tool-wide {
  width: 112px;
}

.sep {
  width: 1px;
  height: 40px;
  background: #333;
}

.tool-icons {
  display: flex;
  width: 365px;
  padding-left: 2px;
}

.tool-icons button {
  width: 60px;
  height: 40px;
}

.sep + .tool-wide {
  margin-left: 1px;
}

.tool-wide + .sep {
  margin-left: 3px;
}

.more {
  width: 60px;
  height: 40px;
}

.preview-toggle {
  margin-left: auto;
}

/* Main area */
.body {
  flex: 1;
  display: flex;
  min-height: 0;
}

.sidebar {
  display: flex;
  width: 291px;
  border-right: 2px solid #272727;
  background: #171717;
  overflow: hidden;
}

.tree {
  width: 267px;
  margin: 0;
  padding: 8px 0 0 3px;
  background: #191919;
  list-style: none;
}

.tree a {
  display: flex;
  align-items: center;
  height: 40px;
  padding-left: 23px;
  overflow: hidden;
  white-space: nowrap;
}

.tree a.root {
  padding-left: 12px;
}

.tree a.current {
  border: 1px solid #2a2a2a;
  border-radius: 2px;
  padding-left: 22px;
  background: #333;
}

.tree .ic20 {
  margin-right: 5px;
}

.arrow {
  margin-right: 15px;
  fill: none;
  stroke: #777;
  stroke-width: 2;
}

.arrow.open {
  margin-right: 16px;
  stroke: #ccc;
}

.scroll {
  padding: 21px 0 0 8px;
}

.thumb {
  width: 6px;
  height: 322px;
  background: #959595;
}

.files {
  position: relative;
  flex: 1;
  display: grid;
  grid-template-columns: repeat(auto-fill, 93px);
  align-content: start;
  gap: 1px 4px;
  padding: 8px 0 0 20px;
}

.item {
  position: relative;
  display: flex;
  flex-direction: column;
  align-items: center;
  border: 1px solid transparent;
  padding: 2px 0 3px;
  text-align: center;
  white-space: nowrap;
}

.item svg {
  width: 60px;
  height: 60px;
  margin-right: 1px;
}

.hidden-file svg {
  opacity: 0.5;
}

.focused {
  align-self: start;
  border-color: #666;
  border-radius: 2px;
}

/* Red marker round the focused folder */
.focused::after {
  content: "";
  position: absolute;
  inset: -13px -9px -19px -5px;
  border: 2px solid #ed1c24;
}

.note-arrow {
  position: absolute;
  left: 112px;
  top: 364px;
  width: 190px;
  height: 200px;
}

.note-text {
  position: absolute;
  left: 373px;
  top: 390px;
  margin: 0;
  color: #ed1c24;
  font-size: 23px;
  line-height: 32px;
}

.preview {
  display: flex;
  align-items: center;
  justify-content: center;
  width: 18%;
  padding-bottom: 2px;
  border-left: 1px solid #303030;
  background: #202020;
}

.status {
  display: flex;
  align-items: center;
  gap: 13px;
  height: 29px;
  padding: 0 0 2px 17px;
  background: #1c1c1c;
  color: #d6d6d6;
}

.status i {
  width: 1px;
  height: 13px;
  background: #fff;
}

/* Taskbar */
.taskbar {
  display: grid;
  grid-template-columns: 1fr auto 1fr;
  align-items: center;
  height: 60px;
  padding-bottom: 2px;
  border-top: 1px solid #56414a;
  background: linear-gradient(90deg, #3c151d, #35151c 50%, #3b151e);
}

.monitor {
  display: grid;
  grid-template-columns: 110px auto;
  justify-content: start;
  padding-left: 8px;
}

.monitor b {
  font-family: "Liberation Sans", sans-serif;
  font-weight: 400;
}

.apps {
  display: flex;
  gap: 5px;
}

.apps button {
  position: relative;
  width: 50px;
  height: 50px;
  border-radius: 5px;
}

.apps svg {
  width: 30px;
  height: 30px;
}

.apps .active {
  border: 1px solid #4e333b;
  background: #48272f;
}

.apps .active::after,
.apps .running::after {
  content: "";
  position: absolute;
  bottom: 1px;
  width: 8px;
  height: 4px;
  border-radius: 2px;
  background: #a5969b;
}

.apps .active::after {
  bottom: 0;
  width: 20px;
  background: #4cc2ff;
}

.tray {
  display: flex;
  align-items: center;
  justify-content: flex-end;
  padding-right: 25px;
}

.tray-flag {
  width: 40px;
}

.tray > button:first-child {
  width: 38px;
}

.tray-sogou {
  width: 56px;
}

.tray-status {
  gap: 10px;
  padding: 0 9px;
}

.clock {
  display: flex;
  flex-direction: column;
  align-items: flex-end;
  width: 90px;
}

.bell {
  width: 20px;
  margin-left: 9px;
}

/* Floating input-method bar */
.ime {
  position: absolute;
  right: 0;
  bottom: 60px;
  display: flex;
  align-items: center;
  gap: 10px;
  height: 32px;
  padding: 0 5px 0 41px;
  border: 1px solid #b6c6e0;
  border-right: 0;
  background: #fff;
}

.ime-logo {
  position: absolute;
  left: -6px;
  top: -7px;
  width: 40px;
  height: 40px;
}

.watermark {
  position: absolute;
  right: 16px;
  bottom: 6px;
  color: rgba(225, 215, 218, 0.65);
  font-family: "Liberation Sans", sans-serif;
  font-size: 13px;
}
```
